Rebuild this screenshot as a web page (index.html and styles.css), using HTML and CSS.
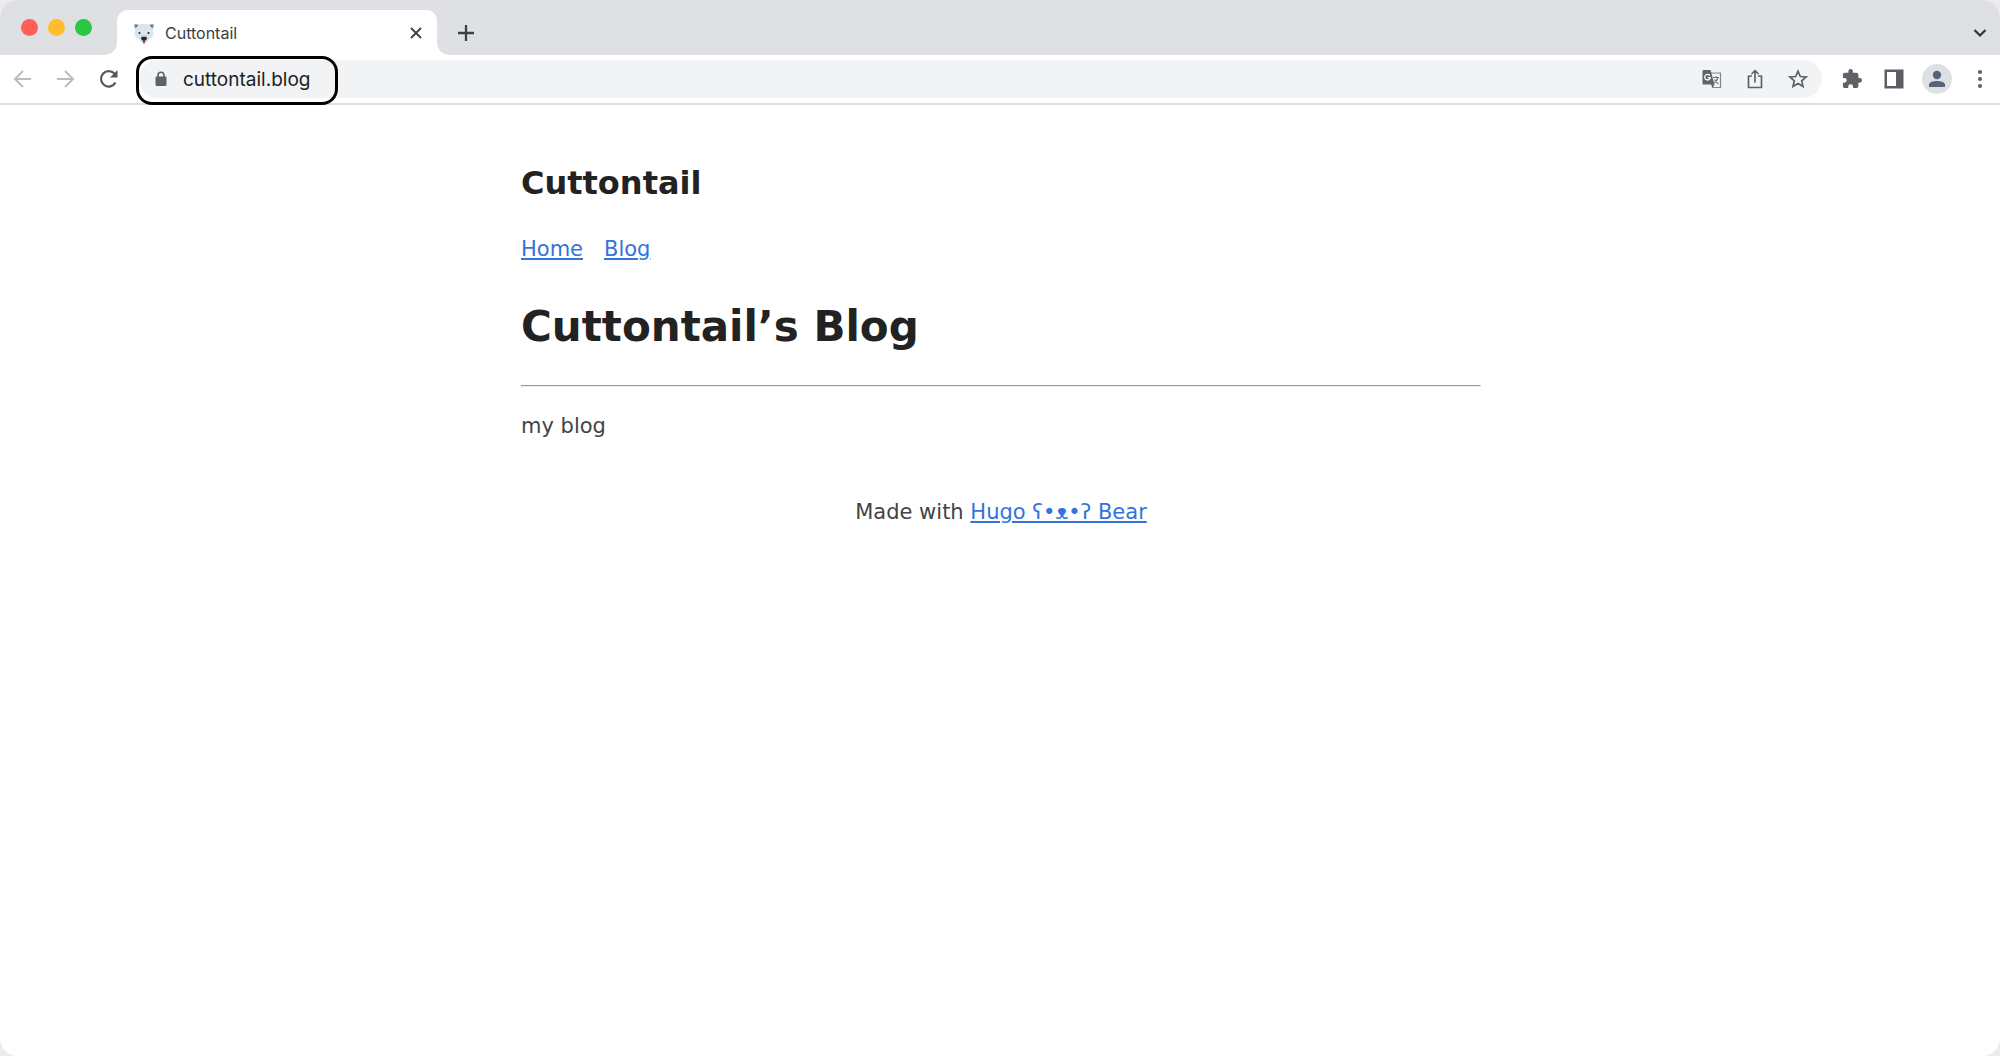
FILE: index.html
```
<!DOCTYPE html>
<html lang="en">
<head>
  <meta charset="UTF-8">
  <meta name="viewport" content="width=device-width, initial-scale=1.0">
  <title>Cuttontail</title>
  <link rel="stylesheet" href="styles.css">
</head>
<body>
  <div class="browser">
    <div class="tab-strip">
      <div class="window-buttons">
        <button type="button" class="close" aria-label="Close window"></button>
        <button type="button" class="minimize" aria-label="Minimize window"></button>
        <button type="button" class="maximize" aria-label="Maximize window"></button>
      </div>
      <div class="tab">
        <svg class="favicon" viewBox="0 0 22 22" width="22" height="22">
          <path d="M1 2Q3 1 6.500 3L3 8.500Q.5 5 1 2ZM21 2Q19 1 15.500 3L19 8.500Q21.500 5 21 2Z" fill="#a9bdc9"/>
          <path d="M2 3Q3.500 2.500 5.500 4L3.500 6.500Q2 5 2 3ZM20 3Q18.500 2.500 16.500 4L18.500 6.500Q20 5 20 3Z" fill="#5b6b77"/>
          <path d="M11 2C6 2 3.500 4 2.500 7.500C1.500 10 1 12.500 2 14C4.500 16.500 6 17 7.500 19C8.500 20.500 9.500 21 11 21C12.500 21 13.500 20.500 14.500 19C16 17 17.500 16.500 20 14C21 12.500 20.500 10 19.500 7.500C18.500 4 16 2 11 2Z" fill="#dce5eb"/>
          <path d="M8 13L7.500 18L9 20H13L14.500 18L14 13Z" fill="#c5d2da"/>
          <circle cx="6.500" cy="11" r="1.100" fill="#292f33"/>
          <circle cx="15.500" cy="11" r="1.100" fill="#292f33"/>
          <path d="M8 15.500Q11 14 14 15.500Q14 18 11 19Q8 18 8 15.500Z" fill="#20252a"/>
          <path d="M10 19H12V21Q11 22 10 21Z" fill="#dd2e44"/>
        </svg>
        <span class="tab-title">Cuttontail</span>
        <button type="button" class="icon-button" aria-label="Close tab">
          <svg viewBox="0 0 14 14" width="14" height="14"><path d="M2 2L12 12M12 2L2 12" stroke="#3c4043" stroke-width="1.800"/></svg>
        </button>
      </div>
      <button type="button" class="icon-button new-tab" aria-label="New tab">
        <svg viewBox="0 0 18 18" width="18" height="18"><path d="M9 1V17M1 9H17" stroke="#3c4043" stroke-width="2.300"/></svg>
      </button>
      <button type="button" class="icon-button tab-search" aria-label="Search tabs">
        <svg viewBox="0 0 14 14" width="14" height="14"><path d="M1.500 4L7 9.500L12.500 4" fill="none" stroke="#303336" stroke-width="2.200"/></svg>
      </button>
    </div>

    <div class="toolbar">
      <div class="nav-buttons">
        <button type="button" class="icon-button" aria-label="Back">
          <svg viewBox="0 0 20 20" width="20" height="20"><path d="M18 10H2.500M10 2L2 10L10 18" fill="none" stroke="#babcbe" stroke-width="2"/></svg>
        </button>
        <button type="button" class="icon-button" aria-label="Forward">
          <svg viewBox="0 0 20 20" width="20" height="20"><path d="M1 10H16.500M9 2L17 10L9 18" fill="none" stroke="#babcbe" stroke-width="2"/></svg>
        </button>
        <button type="button" class="icon-button" aria-label="Reload">
          <svg viewBox="0 0 20 20" width="20" height="20"><path d="M16.500 13.500A7.700 7.700 0 1 1 15.400 4.600" fill="none" stroke="#55595d" stroke-width="2.200"/><path d="M18.500 1V8.500H11Z" fill="#55595d"/></svg>
        </button>
      </div>

      <form class="address-bar">
        <div class="highlight"></div>
        <svg viewBox="0 0 12 16" width="12" height="16"><path d="M3 6V4.200A3 3 0 0 1 9 4.200V6" fill="none" stroke="#5f6368" stroke-width="1.600"/><rect x="0.500" y="5.500" width="11" height="9.500" rx="1.200" fill="#5f6368"/></svg>
        <input type="text" class="url" aria-label="Address" value="cuttontail.blog">
        <button type="button" class="icon-button" aria-label="Translate">
          <svg viewBox="0 0 20 20" width="20" height="20">
            <path d="M8 4H18.500V18.500H11" fill="none" stroke="#85898d" stroke-width="1.200"/>
            <path d="M1.500 1H8.500L12.500 15.500H1.500Q0.500 15.500 0.500 14.500V2Q0.500 1 1.500 1Z" fill="#5f6368"/>
            <path d="M9 15.500H12.500L10.500 19Z" fill="#505458"/>
            <path d="M7.800 6.500A2.800 2.800 0 1 0 8.300 8.700H5.700" fill="none" stroke="#fff" stroke-width="1.300"/>
            <path d="M11 8.500H17M14 7V8.500M16 8.500Q15 12 12 14M12.500 10.500Q14 13 16.500 15" fill="none" stroke="#6f7377" stroke-width="1.200"/>
          </svg>
        </button>
        <button type="button" class="icon-button" aria-label="Share">
          <svg viewBox="0 0 20 20" width="20" height="20"><path d="M7 7H3.500V18.500H16.500V7H13M10 13.500V2M6.500 5L10 1.500L13.500 5" fill="none" stroke="#5f6368" stroke-width="1.700" stroke-linejoin="round"/></svg>
        </button>
        <button type="button" class="icon-button" aria-label="Bookmark">
          <svg viewBox="0 0 20 20" width="20" height="20"><path d="M10 2.200L12.300 7.500L18.100 8L13.700 11.800L15 17.500L10 14.500L5 17.500L6.300 11.800L1.900 8L7.700 7.500Z" fill="none" stroke="#5f6368" stroke-width="1.700"/></svg>
        </button>
      </form>

      <div class="actions">
        <button type="button" class="icon-button" aria-label="Extensions">
          <svg viewBox="1 1 22 22" width="20" height="20"><path d="M20.500 11H19V7c0-1.100-.9-2-2-2h-4V3.500a2.500 2.500 0 0 0-5 0V5H4c-1.100 0-2 .9-2 2v3.800h1.500a2.700 2.700 0 0 1 0 5.400H2V20c0 1.100.9 2 2 2h3.800v-1.500a2.700 2.700 0 0 1 5.400 0V22H17c1.100 0 2-.9 2-2v-4h1.500a2.500 2.500 0 0 0 0-5z" fill="#5f6368"/></svg>
        </button>
        <button type="button" class="icon-button" aria-label="Side panel">
          <svg viewBox="0 0 20 20" width="20" height="20"><path d="M.5.5H19.500V19.500H.5ZM3 3V17H12V3Z" fill="#5a5e63" fill-rule="evenodd"/></svg>
        </button>
        <button type="button" class="icon-button profile" aria-label="Profile">
          <svg viewBox="0 0 18 18" width="18" height="18"><circle cx="9" cy="5" r="4.200" fill="#56637a"/><path d="M1 17V14.500C1 12 6 11 9 11S17 12 17 14.500V17Z" fill="#56637a"/></svg>
        </button>
        <button type="button" class="icon-button" aria-label="Menu">
          <svg viewBox="0 0 20 20" width="20" height="20"><g fill="#5f6368"><circle cx="10" cy="3" r="2.100"/><circle cx="10" cy="10" r="2.100"/><circle cx="10" cy="17" r="2.100"/></g></svg>
        </button>
      </div>
    </div>

    <div class="page">
      <header>
        <h2>Cuttontail</h2>
        <nav>
          <a href="#">Home</a>
          <a href="#">Blog</a>
        </nav>
      </header>
      <main>
        <h1>Cuttontail’s Blog</h1>
        <hr>
        <p>my blog</p>
      </main>
      <footer>
        Made with <a href="#">Hugo ʕ•ᴥ•ʔ Bear</a>
      </footer>
    </div>
  </div>
</body>
</html>
```
FILE: styles.css
```
* {
  box-sizing: border-box;
}
body {
  margin: 0;
  background: #ececec;
  font-family: Inter, "Liberation Sans", sans-serif;
}
button {
  padding: 0;
  border: 0;
  background: none;
  cursor: pointer;
}
svg {
  display: block;
  flex: none;
}
.browser {
  min-height: 100vh;
  border-radius: 18px;
  overflow: hidden;
  background: #fff;
}
.icon-button {
  display: flex;
  align-items: center;
  justify-content: center;
  flex: none;
}

/* tabs */
.tab-strip {
  display: flex;
  align-items: flex-end;
  height: 55px;
  padding-right: 13px;
  background: #dee0e4;
}
.window-buttons {
  display: flex;
  gap: 10px;
  width: 117px;
  padding-left: 21px;
  padding-bottom: 19px;
}
.window-buttons button {
  width: 17px;
  height: 17px;
  border-radius: 50%;
}
.window-buttons .close {
  background: #ff5f57;
}
.window-buttons .minimize {
  background: #febc2e;
}
.window-buttons .maximize {
  background: #28c840;
}
.tab {
  position: relative;
  display: flex;
  align-items: center;
  gap: 10px;
  width: 320px;
  height: 45px;
  padding: 0 14px 0 16px;
  border-radius: 11px 11px 0 0;
  background: #fff;
}
/* curved feet of the tab */
.tab::before,
.tab::after {
  content: "";
  position: absolute;
  bottom: 0;
  width: 11px;
  height: 11px;
}
.tab::before {
  right: 100%;
  background: radial-gradient(circle at 0 0, #dee0e4 10px, #fff 11px);
}
.tab::after {
  left: 100%;
  background: radial-gradient(circle at 100% 0, #dee0e4 10px, #fff 11px);
}
.tab-title {
  flex: 1;
  font-size: 16px;
  color: #3c4043;
}
.new-tab {
  height: 45px;
  margin-left: 20px;
}
.tab-search {
  height: 45px;
  margin-left: auto;
}

/* toolbar */
.toolbar {
  display: flex;
  align-items: center;
  height: 50px;
  padding-right: 10px;
  border-bottom: 2px solid #dddee0;
}
.nav-buttons {
  display: flex;
  gap: 23px;
  padding: 0 20px 0 13px;
}
.address-bar {
  position: relative;
  display: flex;
  align-items: center;
  gap: 23px;
  flex: 1;
  height: 38px;
  padding: 0 14px 0 16px;
  border-radius: 19px;
  background: #f1f3f4;
}
.highlight {
  position: absolute;
  top: -4px;
  left: -3px;
  width: 202px;
  height: 49px;
  border: 3px solid #000;
  border-radius: 16px;
  pointer-events: none;
}
.url {
  flex: 1;
  min-width: 0;
  margin-left: -7px;
  padding: 0;
  border: 0;
  outline: 0;
  background: none;
  font: inherit;
  font-size: 19px;
  color: #202124;
}
.actions {
  display: flex;
  align-items: center;
  gap: 22px;
  padding-left: 20px;
}
.profile {
  width: 30px;
  height: 30px;
  margin: 0 -4px;
  border-radius: 50%;
  background: #dee0e4;
}

/* blog */
.page {
  max-width: 1012px;
  margin: 0 auto;
  padding: 53px 25px 53px 27px;
  font-family: Verdana, "DejaVu Sans", sans-serif;
  font-size: 21px;
  line-height: 32px;
  color: #444;
}
h1,
h2 {
  margin: 0;
  color: #222;
}
h1 {
  margin: 37px 0 33px;
  font-size: 42px;
  line-height: 50px;
}
h2 {
  font-size: 32px;
  line-height: 50px;
}
nav {
  display: flex;
  gap: 21px;
  margin-top: 25px;
}
a {
  color: #3273dc;
}
hr {
  margin: 0 0 23px;
}
p {
  margin: 0;
}
footer {
  padding: 54px 0;
  text-align: center;
}
```
